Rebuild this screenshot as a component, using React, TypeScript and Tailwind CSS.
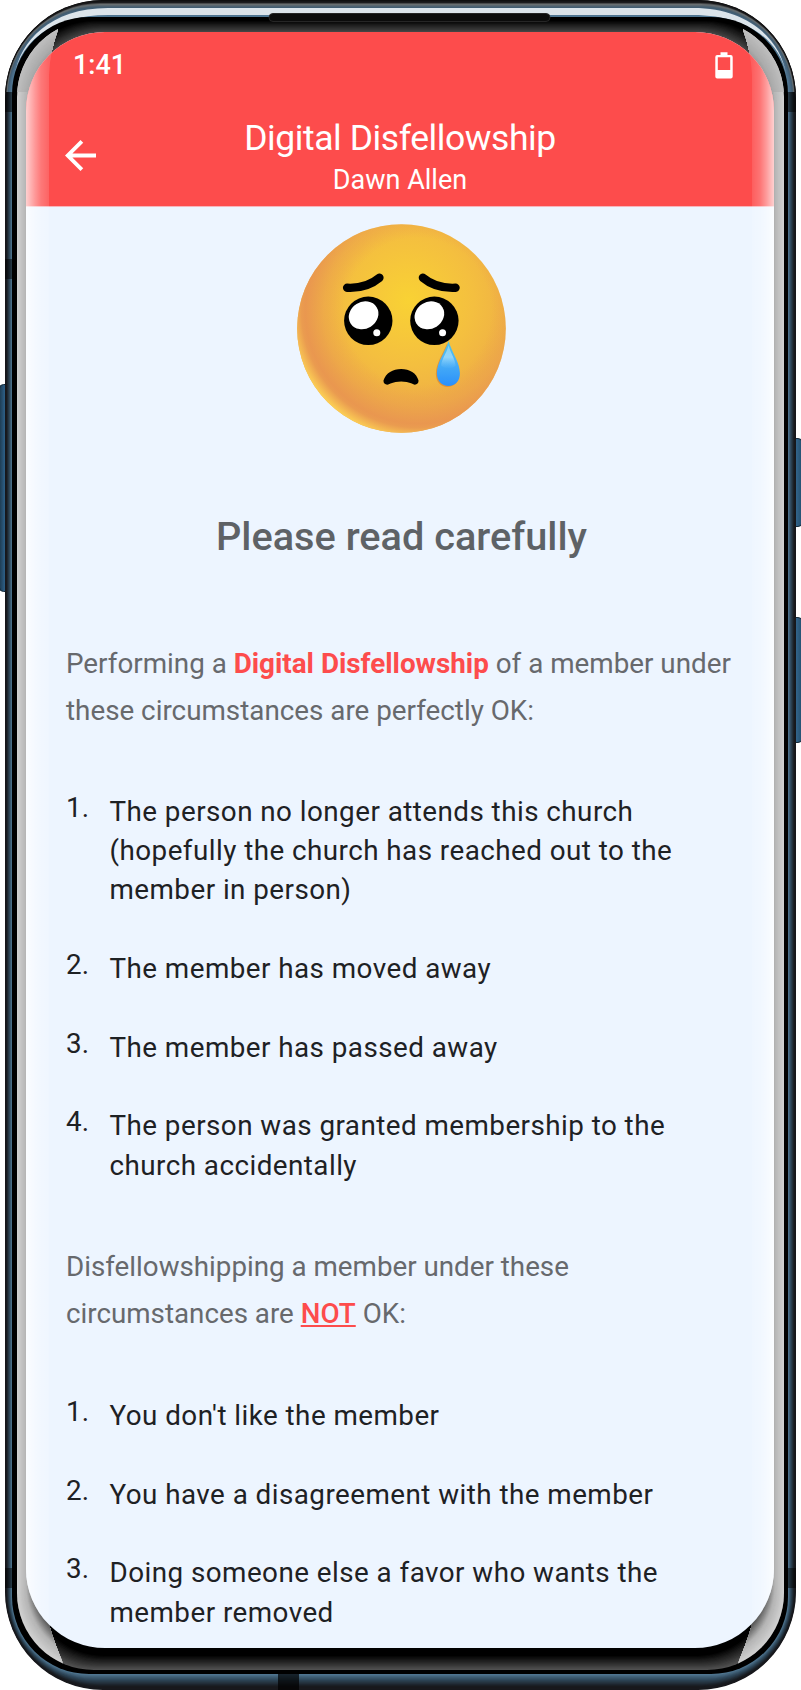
import React from "react";

type Rect = { l: number; t: number; r: number; b: number; rx: number };
type Stop = [number, number[]];

const OUTER: Rect = { l: 5, t: 0, r: 796, b: 1690, rx: 98 };
const INNER: Rect = { l: 12, t: 17, r: 788, b: 1674, rx: 77 };
const GLASS: Rect = { l: 17, t: 20, r: 784, b: 1670, rx: 77 };
const SCREEN: Rect = { l: 26, t: 32, r: 774, b: 1648, rx: 79 };
const GLOSS_END: Rect = { l: 37, t: 40, r: 764, b: 1650, rx: 70 };

const mix = (a: number, b: number, t: number) => a + (b - a) * t;

function colorAt(stops: Stop[], t: number) {
  let i = 0;
  while (i < stops.length - 2 && t > stops[i + 1][0]) i++;
  const [t0, c0] = stops[i];
  const [t1, c1] = stops[i + 1];
  const k = Math.min(1, Math.max(0, (t - t0) / (t1 - t0)));
  return `rgb(${c0.map((v, n) => Math.round(mix(v, c1[n], k))).join(",")})`;
}

function Rings({ from, to, stops, steps }: { from: Rect; to: Rect; stops: Stop[]; steps: number }) {
  return (
    <>
      {Array.from({ length: steps }, (_, i) => {
        const t = i / (steps - 1);
        const l = mix(from.l, to.l, t);
        const top = mix(from.t, to.t, t);
        return (
          <rect
            key={i}
            x={l}
            y={top}
            width={mix(from.r, to.r, t) - l}
            height={mix(from.b, to.b, t) - top}
            rx={mix(from.rx, to.rx, t)}
            fill={colorAt(stops, t)}
          />
        );
      })}
    </>
  );
}

const STEEL: Stop[] = [
  [0, [24, 24, 28]],
  [0.2, [24, 26, 30]],
  [0.6, [46, 70, 88]],
  [1, [84, 124, 152]],
];
const STEEL_TOP: Stop[] = [
  [0, [16, 16, 16]],
  [0.12, [28, 28, 30]],
  [0.22, [108, 112, 112]],
  [0.4, [66, 92, 112]],
  [0.6, [72, 104, 130]],
  [1, [84, 124, 152]],
];
const GLOSS: Stop[] = [
  [0, [208, 208, 208]],
  [0.45, [180, 180, 180]],
  [1, [50, 50, 50]],
];
const GLOSS_TOP: Stop[] = [
  [0, [190, 190, 190]],
  [0.45, [172, 172, 172]],
  [1, [125, 125, 125]],
];
const GLOW_IN: Stop[] = [
  [0, [0, 0, 0]],
  [1, [74, 74, 74]],
];
const GLOW_OUT: Stop[] = [
  [0, [80, 80, 80]],
  [1, [0, 0, 0]],
];

function DeviceBody() {
  return (
    <svg className="absolute inset-0" width="801" height="1690" viewBox="0 0 801 1690" aria-hidden="true">
      <defs>
        <clipPath id="topPart"><rect x="0" y="0" width="801" height="92" /></clipPath>
        <clipPath id="bottomPart"><rect x="0" y="1560" width="801" height="130" /></clipPath>
        <clipPath id="glossSides">
          <path d="M58 30 Q50 50 49 75 V1615 L50 1628 Q54 1642 63 1663 V1690 H0 V0 H58Z M743 30 Q751 50 752 75 V1615 L751 1628 Q747 1642 738 1663 V1690 H801 V0 H743Z" />
        </clipPath>
        <linearGradient id="key" x1="0" y1="0" x2="1" y2="0">
          <stop offset="0" stopColor="#1d3a50" />
          <stop offset="0.4" stopColor="#2c5c82" />
        </linearGradient>
        <linearGradient id="keyRight" x1="0" y1="0" x2="1" y2="0">
          <stop offset="0.4" stopColor="#356890" />
          <stop offset="1" stopColor="#24506f" />
        </linearGradient>
      </defs>
      <rect x="-0.500" y="384.500" width="12" height="207" rx="4" fill="url(#key)" stroke="#152a3a" />
      <rect x="790" y="438.500" width="12" height="88" rx="4" fill="url(#keyRight)" stroke="#152a3a" />
      <rect x="790" y="617.500" width="12" height="125" rx="4" fill="url(#keyRight)" stroke="#152a3a" />
      <Rings from={OUTER} to={INNER} stops={STEEL} steps={18} />
      <g clipPath="url(#topPart)">
        <Rings from={OUTER} to={INNER} stops={STEEL_TOP} steps={18} />
        <path d="M15 74 C20 42 50 8 108 8 H693 C751 8 781 42 786 74 C780 42 749 15 693 15 H108 C52 15 21 42 15 74Z" fill="#dce4ea" />
      </g>
      <g fill="#000" fillOpacity="0.5">
        <rect x="5" y="92" width="8" height="20" />
        <rect x="787" y="92" width="9" height="20" />
        <rect x="5" y="259" width="8" height="20" />
        <rect x="5" y="1568" width="8" height="20" />
        <rect x="787" y="1568" width="9" height="20" />
        <rect x="278" y="1674" width="21" height="16" fillOpacity="0.7" />
      </g>
      <rect x="12" y="17" width="776" height="1657" rx="77" fill="#000" />
      <g clipPath="url(#topPart)">
        <Rings from={GLASS} to={SCREEN} stops={GLOW_IN} steps={14} />
      </g>
      <g clipPath="url(#bottomPart)">
        <Rings from={GLASS} to={{ l: 29, t: 32, r: 772, b: 1656, rx: 76 }} stops={GLOW_OUT} steps={14} />
      </g>
      <g clipPath="url(#glossSides)">
        <Rings from={GLASS} to={GLOSS_END} stops={GLOSS} steps={24} />
        <g clipPath="url(#topPart)">
          <Rings from={GLASS} to={GLOSS_END} stops={GLOSS_TOP} steps={24} />
        </g>
      </g>
      <rect x="269" y="13.500" width="281" height="8" rx="4" fill="#0c0c0c" stroke="#262626" />
    </svg>
  );
}

function EdgeReflections() {
  return (
    <svg className="pointer-events-none absolute inset-0" width="748" height="1616" viewBox="26 32 748 1616" aria-hidden="true">
      <defs>
        <linearGradient id="edgeL" x1="26" y1="0" x2="49" y2="0" gradientUnits="userSpaceOnUse">
          <stop offset="0" stopColor="#fff" stopOpacity="0.74" />
          <stop offset="0.35" stopColor="#fff" stopOpacity="0.46" />
          <stop offset="0.65" stopColor="#fff" stopOpacity="0.25" />
          <stop offset="1" stopColor="#fff" stopOpacity="0.13" />
        </linearGradient>
        <linearGradient id="edgeR" x1="774" y1="0" x2="752" y2="0" gradientUnits="userSpaceOnUse">
          <stop offset="0" stopColor="#fff" stopOpacity="0.74" />
          <stop offset="0.35" stopColor="#fff" stopOpacity="0.44" />
          <stop offset="0.65" stopColor="#fff" stopOpacity="0.22" />
          <stop offset="1" stopColor="#fff" stopOpacity="0.1" />
        </linearGradient>
      </defs>
      <path d="M58 30 Q50 50 49 75 V1648 H26 V30Z" fill="url(#edgeL)" />
      <path d="M743 30 Q751 50 752 75 V1648 H774 V30Z" fill="url(#edgeR)" />
    </svg>
  );
}

function BatteryIcon() {
  return (
    <svg width="18" height="27" viewBox="0 0 18 27" aria-hidden="true">
      <path
        fill="#fff"
        fillRule="evenodd"
        d="M5.500 0.300h7v2.700h3.300q1.900 0 1.900 1.900v19.600q0 1.900-1.900 1.900H2.200q-1.900 0-1.900-1.900V4.900q0-1.900 1.900-1.900h3.300z M2.800 5.300v12.700h12.400V5.300z"
      />
    </svg>
  );
}

function BackIcon() {
  return (
    <svg width="31" height="31" viewBox="4 4 16 16" aria-hidden="true">
      <path fill="#fff" d="M20 11H7.830l5.590-5.590L12 4l-8 8 8 8 1.410-1.410L7.830 13H20v-2z" />
    </svg>
  );
}

function SadFace() {
  return (
    <svg width="209" height="209" viewBox="50 41 626 626" aria-hidden="true">
      <defs>
        <radialGradient id="face" cx="385" cy="270" r="430" gradientUnits="userSpaceOnUse">
          <stop offset="0" stopColor="#f9d234" />
          <stop offset="0.45" stopColor="#f4bf3f" />
          <stop offset="0.72" stopColor="#efb045" />
          <stop offset="1" stopColor="#eca94a" />
        </radialGradient>
        <radialGradient id="shade" cx="412" cy="302" r="392" gradientUnits="userSpaceOnUse">
          <stop offset="0.560" stopColor="#e99550" stopOpacity="0" />
          <stop offset="0.720" stopColor="#e99850" stopOpacity="0.4" />
          <stop offset="0.860" stopColor="#e99550" stopOpacity="0.92" />
          <stop offset="0.890" stopColor="#ea9b50" stopOpacity="0.95" />
          <stop offset="0.980" stopColor="#fdd155" />
        </radialGradient>
        <linearGradient id="tear" x1="0" y1="392" x2="0" y2="526" gradientUnits="userSpaceOnUse">
          <stop offset="0" stopColor="#4fc3e8" />
          <stop offset="0.4" stopColor="#4eb4f5" />
          <stop offset="1" stopColor="#2a90fb" />
        </linearGradient>
        <linearGradient id="tearShine" x1="0" y1="405" x2="0" y2="475" gradientUnits="userSpaceOnUse">
          <stop offset="0" stopColor="#b5e6fa" stopOpacity="0.5" />
          <stop offset="0.5" stopColor="#9bd8fb" stopOpacity="0.9" />
          <stop offset="1" stopColor="#6cc0fb" stopOpacity="0" />
        </linearGradient>
      </defs>
      <circle cx="363" cy="354" r="312.500" fill="url(#face)" />
      <circle cx="363" cy="354" r="312.500" fill="url(#shade)" />
      <g fill="none" stroke="#000" strokeLinecap="round" strokeWidth="25">
        <path d="M200 232 Q258 235 297 202" />
        <path d="M427 202 Q466 235 525 232" />
      </g>
      <circle cx="263.500" cy="331" r="72.500" />
      <circle cx="461.500" cy="331" r="72.500" />
      <g fill="#fff">
        <ellipse cx="249.500" cy="314.500" rx="46" ry="40" transform="rotate(-32 249.500 314.500)" />
        <ellipse cx="446.500" cy="314.500" rx="46" ry="40" transform="rotate(-32 446.500 314.500)" />
        <circle cx="289" cy="367" r="10.500" />
        <circle cx="486" cy="367" r="10.500" />
      </g>
      <path d="M309 510 C316 487 337 475 362 475 C387 475 408 487 414 510 C415 521 403 526 394 519 C375 511 349 511 330 519 C320 526 308 521 309 510Z" />
      <path d="M500 398 C486 430 466 460 466 490 C466 514 482 529 500 529 C520 529 535 514 535 490 Z" fill="#d98632" opacity="0.7" />
      <path d="M504 392 C491 430 469 456 469 488 C469 511 484 526 504 526 C524 526 538 511 538 488 C538 456 516 430 504 392Z" fill="url(#tear)" />
      <path d="M504 405 C496 432 482 448 482 466 Q504 480 525 466 C525 448 512 432 504 405Z" fill="url(#tearShine)" />
    </svg>
  );
}

function NumberedList({ items, className }: { items: string[][]; className: string }) {
  return (
    <ol className={`flex flex-col gap-[39.300px] text-[27.800px] leading-[39.350px] tracking-[0.460px] text-[#1e2124] ${className}`}>
      {items.map((lines, i) => (
        <li key={lines[0]} className="flex">
          <span className="-mt-1 w-[43.500px] shrink-0 tracking-[0.200px]">{i + 1}.</span>
          <span className="flex flex-col whitespace-nowrap">
            {lines.map((line) => (
              <span key={line}>{line}</span>
            ))}
          </span>
        </li>
      ))}
    </ol>
  );
}

const ALLOWED = [
  ["The person no longer attends this church", "(hopefully the church has reached out to the", "member in person)"],
  ["The member has moved away"],
  ["The member has passed away"],
  ["The person was granted membership to the", "church accidentally"],
];
const FORBIDDEN = [
  ["You don't like the member"],
  ["You have a disagreement with the member"],
  ["Doing someone else a favor who wants the", "member removed"],
];

export default function App() {
  return (
    <div className="relative h-[1690px] w-[801px] overflow-hidden bg-white pt-8 pl-[26px] font-['Roboto',sans-serif]">
      <DeviceBody />
      <div className="relative flex h-[1616px] w-[748px] flex-col overflow-hidden rounded-[79px] bg-[#edf5ff]">
        <header className="h-[175px] shrink-0 border-b border-[#f8b4ba] bg-[#fd4c4c] text-white">
          <div className="flex h-[66px] items-center justify-between pr-[41px] pl-[47px]">
            <span className="pt-px text-[27px] font-medium">1:41</span>
            <BatteryIcon />
          </div>
          <div className="grid grid-cols-[80px_1fr_80px] items-center">
            <div className="pt-[14px] pl-[39px]">
              <BackIcon />
            </div>
            <div className="flex flex-col items-center pt-[18px]">
              <h1 className="text-[35.500px] leading-[44px] tracking-[-0.420px]">Digital Disfellowship</h1>
              <p className="pt-[2px] text-[27px] leading-[36px]">Dawn Allen</p>
            </div>
          </div>
        </header>
        <main className="flex flex-col pr-9 pl-10">
          <div className="flex justify-center pt-[17px] pr-[2px]">
            <SadFace />
          </div>
          <h2 className="mt-[80px] pr-px text-center text-[39.700px] leading-[48px] font-medium text-[#5e6266]">Please read carefully</h2>
          <p className="mt-[78.500px] text-[27.800px] leading-[47.300px] whitespace-nowrap text-[#67696d]">
            Performing a <strong className="font-bold text-[#fd4c4c]">Digital Disfellowship</strong> of a member under
            <br />
            these circumstances are perfectly OK:
          </p>
          <NumberedList items={ALLOWED} className="mt-[57.700px]" />
          <p className="mt-[58px] text-[27.750px] leading-[47.300px] whitespace-nowrap text-[#67696d]">
            Disfellowshipping a member under these
            <br />
            circumstances are <strong className="font-medium text-[#fd4c4c] underline">NOT</strong> OK:
          </p>
          <NumberedList items={FORBIDDEN} className="mt-[58.500px]" />
        </main>
        <EdgeReflections />
      </div>
    </div>
  );
}
